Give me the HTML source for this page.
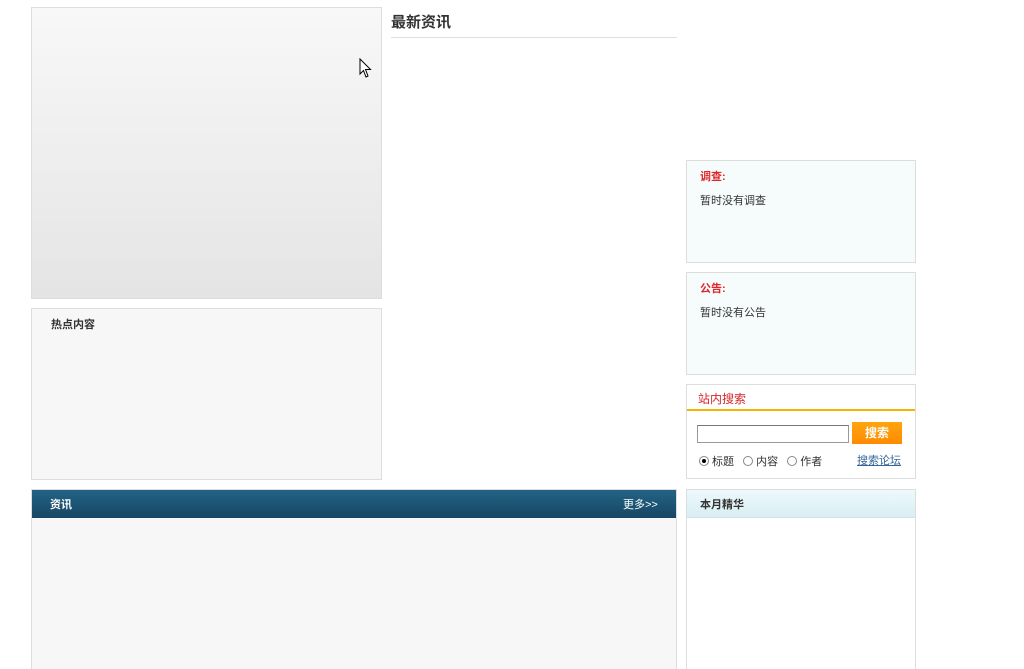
<!DOCTYPE html>
<html style="width:1024px;height:669px;overflow:hidden"><head><meta charset="utf-8"><style>
*{margin:0;padding:0;box-sizing:border-box}
body{width:1024px;height:669px;background:#fff;font-family:"Liberation Sans","Noto Sans CJK SC",sans-serif;font-size:12px;color:#333;position:relative;overflow:hidden}
.a{position:absolute}
.box{border:1px solid #ddd}
.red{color:#e0262b;font-weight:bold}
.r{display:inline-block;width:10px;height:10px;border:1px solid #888;border-radius:50%;position:relative;top:1px}
</style></head><body>
<div class="a box" style="left:31px;top:7px;width:351px;height:292px;background:linear-gradient(#f8f8f8,#e4e4e4)"></div>
<svg class="a" style="left:359px;top:58px" width="14" height="22" viewBox="0 0 14 22"><path d="M1 1 L1 16 L4.5 12.5 L7 19 L9 18 L6.5 11.5 L11.5 11.5 Z" fill="#fff" stroke="#000" stroke-width="1"/></svg>
<div class="a" style="left:391px;top:11px;font-size:15px;font-weight:bold;color:#333">最新资讯</div>
<div class="a" style="left:391px;top:37px;width:286px;height:1px;background:#ddd"></div>
<div class="a box" style="left:31px;top:308px;width:351px;height:172px;background:#f7f7f7"></div>
<div class="a" style="left:51px;top:316px;font-weight:bold;font-size:11px">热点内容</div>

<div class="a box" style="left:686px;top:160px;width:230px;height:103px;background:#f6fcfc"></div>
<div class="a red" style="left:700px;top:168px;font-size:11px">调查:</div>
<div class="a" style="left:700px;top:192px;font-size:11px">暂时没有调查</div>
<div class="a box" style="left:686px;top:272px;width:230px;height:103px;background:#f6fcfc"></div>
<div class="a red" style="left:700px;top:280px;font-size:11px">公告:</div>
<div class="a" style="left:700px;top:304px;font-size:11px">暂时没有公告</div>

<div class="a box" style="left:686px;top:384px;width:230px;height:95px"></div>
<div class="a" style="left:698px;top:390px;color:#d4262b;font-size:12px">站内搜索</div>
<div class="a" style="left:687px;top:409px;width:228px;height:2px;background:#f5b400"></div>
<div class="a" style="left:697px;top:425px;width:152px;height:18px;border:1px solid #999;border-top-color:#777"></div>
<div class="a" style="left:852px;top:422px;width:50px;height:22px;background:linear-gradient(#ffa510,#ff8a00);color:#fff;font-weight:bold;text-align:center;line-height:22px;font-size:12px">搜索</div>
<div class="a" style="left:699px;top:453px;font-size:11px;white-space:nowrap">
<span class="r"><span style="position:absolute;left:2px;top:2px;width:4px;height:4px;background:#000;border-radius:50%"></span></span> 标题
<span class="r" style="margin-left:6px"></span> 内容
<span class="r" style="margin-left:6px"></span> 作者</div>
<div class="a" style="left:857px;top:452px;font-size:11px;color:#336699;text-decoration:underline">搜索论坛</div>

<div class="a" style="left:31px;top:489px;width:646px;height:180px;border:1px solid #ddd;border-bottom:0;background:#f7f7f7"></div>
<div class="a" style="left:32px;top:490px;width:644px;height:28px;background:linear-gradient(#236384,#174764)"></div>
<div class="a" style="left:50px;top:496px;color:#fff;font-weight:bold;font-size:11px">资讯</div>
<div class="a" style="left:623px;top:496px;color:#fff;font-size:11px">更多&gt;&gt;</div>

<div class="a box" style="left:686px;top:489px;width:230px;height:180px;border-bottom:0;background:#fff"></div>
<div class="a" style="left:687px;top:490px;width:228px;height:28px;background:linear-gradient(#eef9fb,#d8eef3);border-bottom:1px solid #cfe3e8"></div>
<div class="a" style="left:700px;top:496px;font-weight:bold;font-size:11px">本月精华</div>
</body></html>
